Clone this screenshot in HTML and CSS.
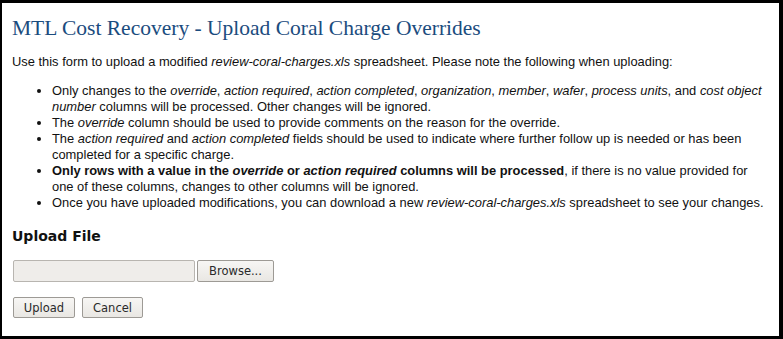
FILE: index.html
```html
<!DOCTYPE html>
<html>
<head>
<meta charset="utf-8">
<link rel="stylesheet" href="styles.css">
</head>
<body>
<div class="page">
  <h1 class="title">MTL Cost Recovery - Upload Coral Charge Overrides</h1>
  <p class="intro">Use this form to upload a modified <i>review-coral-charges.xls</i> spreadsheet. Please note the following when uploading:</p>
  <ul class="notes">
    <li>Only changes to the <i>override</i>, <i>action required</i>, <i>action completed</i>, <i>organization</i>, <i>member</i>, <i>wafer</i>, <i>process units</i>, and <i>cost object number</i> columns will be processed. Other changes will be ignored.</li>
    <li>The <i>override</i> column should be used to provide comments on the reason for the override.</li>
    <li>The <i>action required</i> and <i>action completed</i> fields should be used to indicate where further follow up is needed or has been completed for a specific charge.</li>
    <li><b>Only rows with a value in the <i>override</i> or <i>action required</i> columns will be processed</b>, if there is no value provided for one of these columns, changes to other columns will be ignored.</li>
    <li>Once you have uploaded modifications, you can download a new <i>review-coral-charges.xls</i> spreadsheet to see your changes.</li>
  </ul>
  <h2 class="section">Upload File</h2>
  <div class="file-row">
    <span class="file-field"></span>
    <button class="btn browse" type="button">Browse...</button>
  </div>
  <div class="actions">
    <button class="btn upload" type="button">Upload</button>
    <button class="btn cancel" type="button">Cancel</button>
  </div>
</div>
</body>
</html>
```
FILE: styles.css
```css
html, body {
  margin: 0;
  padding: 0;
  background: #000;
  height: 100%;
}
.page {
  box-sizing: border-box;
  height: 100%;
  border-style: solid;
  border-color: #000;
  border-width: 3px 4px 3px 2px;
  background: #fff;
  padding: 12px 10px 0 10px;
  font-family: "Liberation Sans", Arial, sans-serif;
  font-size: 12.9px;
  color: #111;
}
.title {
  font-family: "Liberation Serif", "Times New Roman", serif;
  font-weight: normal;
  font-size: 21.5px;
  color: #1b4c7e;
  margin: 0 0 13px 0;
  line-height: 26px;
}
.intro {
  margin: 0 0 13px 0;
  line-height: 16px;
}
.notes {
  margin: 0;
  padding-left: 40px;
  line-height: 16px;
}
.section {
  font-family: "DejaVu Sans", sans-serif;
  font-size: 14px;
  font-weight: bold;
  color: #111;
  margin: 16px 0 15px 0;
  line-height: 18px;
}
.file-row {
  display: flex;
  align-items: stretch;
  gap: 2px;
  padding-left: 1px;
  height: 22px;
  margin-bottom: 15px;
}
.file-field {
  display: block;
  box-sizing: border-box;
  width: 182px;
  background: #efedea;
  border: 1px solid #b8b5b0;
  border-radius: 2px;
}
.actions {
  display: flex;
  gap: 7px;
  padding-left: 1px;
}
.btn {
  box-sizing: border-box;
  font-family: "DejaVu Sans", sans-serif;
  font-size: 11.5px;
  color: #2a2a2a;
  height: 21px;
  padding: 0;
  background: linear-gradient(#f7f6f4, #e9e7e3);
  border: 1px solid #9d9a95;
  border-radius: 2px;
}
.browse {
  width: 77px;
  height: 22px;
}
.upload {
  width: 62px;
}
.cancel {
  width: 61px;
}
```
